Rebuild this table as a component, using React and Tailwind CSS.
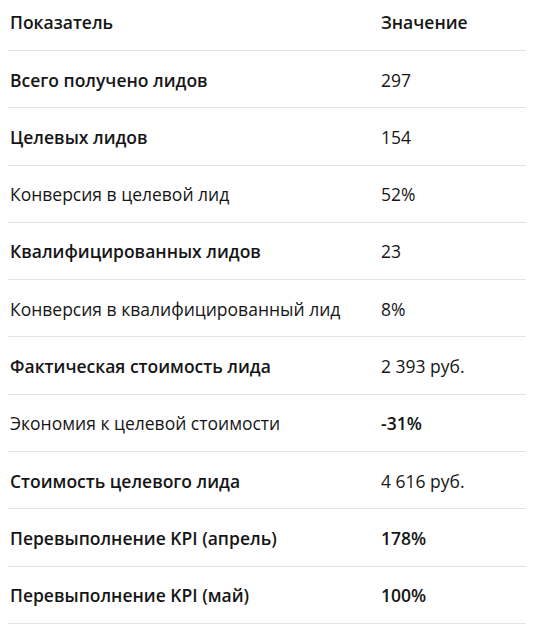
import React from 'react';

const rows = [
  { label: 'Всего получено лидов', value: '297', boldLabel: true },
  { label: 'Целевых лидов', value: '154', boldLabel: true },
  { label: 'Конверсия в целевой лид', value: '52%' },
  { label: 'Квалифицированных лидов', value: '23', boldLabel: true },
  { label: 'Конверсия в квалифицированный лид', value: '8%' },
  { label: 'Фактическая стоимость лида', value: '2 393 руб.', boldLabel: true },
  { label: 'Экономия к целевой стоимости', value: '-31%', boldValue: true },
  { label: 'Стоимость целевого лида', value: '4 616 руб.', boldLabel: true },
  { label: 'Перевыполнение KPI (апрель)', value: '178%', boldLabel: true, boldValue: true },
  { label: 'Перевыполнение KPI (май)', value: '100%', boldLabel: true, boldValue: true },
];

export default function App() {
  return (
    <div className="w-[536px] h-[631px] bg-white text-[#161616] text-[17.5px] overflow-hidden" style={{ fontFamily: '"Open Sans", "Noto Sans", sans-serif' }}>
      <div className="mx-[8px] w-[518px]">
        {/* Header */}
        <div className="flex h-[51px] pb-[6px] items-center border-b border-[#e3e3e3] font-semibold">
          <div className="w-[373px] pl-[2px]">Показатель</div>
          <div className="flex-1">Значение</div>
        </div>
        {rows.map((r) => (
          <div key={r.label} className="flex h-[57.3px] pt-[1px] items-center border-b border-[#e3e3e3]">
            <div className={`w-[373px] pl-[2px] ${r.boldLabel ? 'font-semibold' : ''}`}>{r.label}</div>
            <div className={`flex-1 ${r.boldValue ? 'font-semibold' : ''}`}>{r.value}</div>
          </div>
        ))}
      </div>
    </div>
  );
}
